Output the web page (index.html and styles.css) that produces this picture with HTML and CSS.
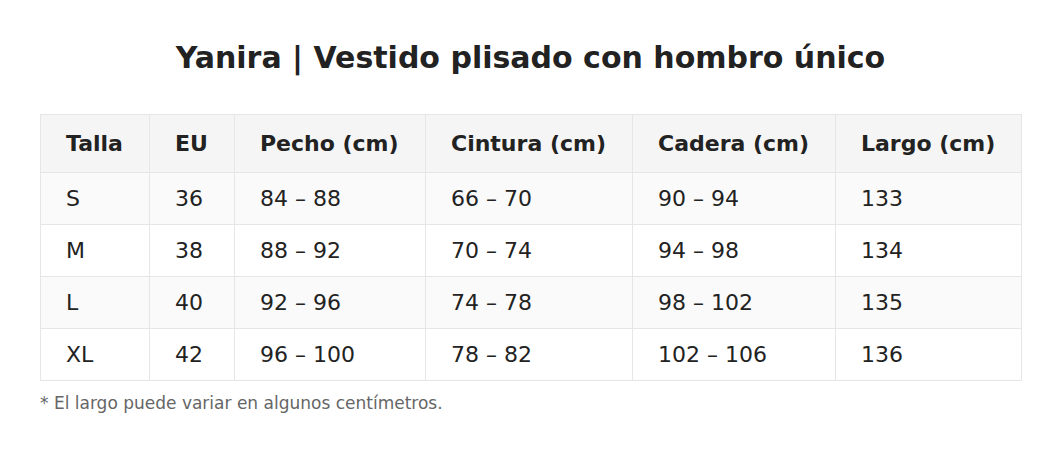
FILE: index.html
```html
<!DOCTYPE html>
<html lang="es">
<head>
<meta charset="utf-8">
<title>Yanira | Vestido plisado con hombro único</title>
<link rel="stylesheet" href="styles.css">
</head>
<body>
<main class="page">
  <h1 class="title">Yanira | Vestido plisado con hombro único</h1>
  <table class="sizes">
    <colgroup>
      <col class="c1"><col class="c2"><col class="c3"><col class="c4"><col class="c5"><col class="c6">
    </colgroup>
    <thead>
      <tr><th>Talla</th><th>EU</th><th>Pecho (cm)</th><th>Cintura (cm)</th><th>Cadera (cm)</th><th>Largo (cm)</th></tr>
    </thead>
    <tbody>
      <tr><td>S</td><td>36</td><td>84 – 88</td><td>66 – 70</td><td>90 – 94</td><td>133</td></tr>
      <tr><td>M</td><td>38</td><td>88 – 92</td><td>70 – 74</td><td>94 – 98</td><td>134</td></tr>
      <tr><td>L</td><td>40</td><td>92 – 96</td><td>74 – 78</td><td>98 – 102</td><td>135</td></tr>
      <tr><td>XL</td><td>42</td><td>96 – 100</td><td>78 – 82</td><td>102 – 106</td><td>136</td></tr>
    </tbody>
  </table>
  <p class="note">* El largo puede variar en algunos centímetros.</p>
</main>
</body>
</html>
```
FILE: styles.css
```css
html, body {
  margin: 0;
  padding: 0;
  background: #ffffff;
}
body {
  font-family: "DejaVu Sans", Verdana, sans-serif;
  color: #222222;
}
.page {
  padding: 40px 40px 0 40px;
}
.title {
  margin: 0 0 38px 0;
  font-size: 30px;
  line-height: 36px;
  font-weight: bold;
  text-align: center;
  color: #222222;
}
.sizes {
  width: 981px;
  border-collapse: collapse;
  table-layout: fixed;
  font-size: 22px;
}
.c1 { width: 109px; }
.c2 { width: 85px; }
.c3 { width: 191px; }
.c4 { width: 207px; }
.c5 { width: 203px; }
.c6 { width: 186px; }
.sizes th,
.sizes td {
  border: 1px solid #e6e6e6;
  text-align: left;
  padding: 0 0 0 25px;
  line-height: 26px;
  white-space: nowrap;
}
.sizes th {
  height: 57px;
  background: #f5f5f5;
  font-weight: bold;
}
.sizes td {
  height: 51px;
}
.sizes tbody tr:nth-child(odd) td {
  background: #fafafa;
}
.sizes tbody tr:nth-child(even) td {
  background: #ffffff;
}
.note {
  margin: 12px 0 0 0;
  font-size: 17px;
  line-height: 20px;
  color: #666666;
}
```
